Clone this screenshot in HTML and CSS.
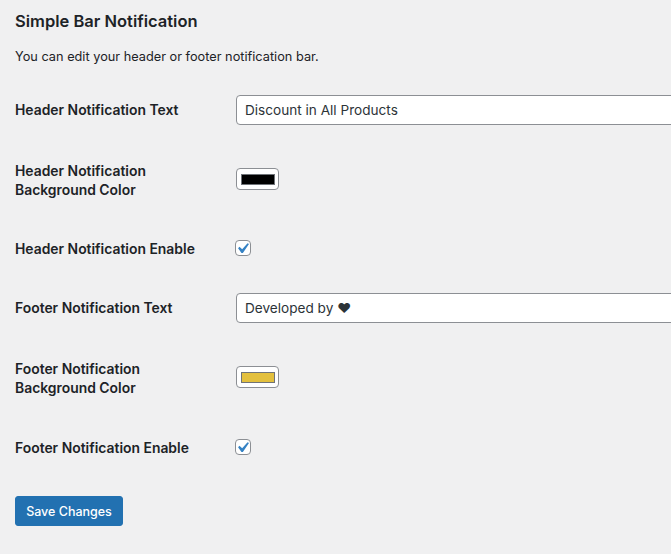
FILE: index.html
```html
<!DOCTYPE html>
<html lang="en">
<head>
<meta charset="utf-8">
<title>Simple Bar Notification</title>
<link rel="stylesheet" href="styles.css">
</head>
<body>
<div class="wrap">
  <h2 class="title">Simple Bar Notification</h2>
  <p class="desc">You can edit your header or footer notification bar.</p>
  <form class="form">
    <div class="row row-text">
      <label class="label">Header Notification Text</label>
      <div class="field"><input class="text" type="text" value="Discount in All Products"></div>
    </div>
    <div class="row row-color">
      <label class="label">Header Notification<br>Background Color</label>
      <div class="field"><span class="color"><span class="swatch swatch-black"></span></span></div>
    </div>
    <div class="row row-check">
      <label class="label">Header Notification Enable</label>
      <div class="field"><span class="check"><svg viewBox="0 0 20 20" width="21" height="21"><path d="M14.83 4.89l1.34.94-5.81 8.38H9.020L5.78 9.670l1.34-1.25 2.57 2.4z" fill="#3582c4"/></svg></span></div>
    </div>
    <div class="row row-text">
      <label class="label">Footer Notification Text</label>
      <div class="field"><input class="text" type="text" value="Developed by &#x2764;&#xFE0E;"></div>
    </div>
    <div class="row row-color">
      <label class="label">Footer Notification<br>Background Color</label>
      <div class="field"><span class="color"><span class="swatch swatch-yellow"></span></span></div>
    </div>
    <div class="row row-check row-last">
      <label class="label">Footer Notification Enable</label>
      <div class="field"><span class="check"><svg viewBox="0 0 20 20" width="21" height="21"><path d="M14.83 4.89l1.34.94-5.81 8.38H9.020L5.78 9.670l1.34-1.25 2.57 2.4z" fill="#3582c4"/></svg></span></div>
    </div>
    <div class="submit">
      <button type="button" class="button">Save Changes</button>
    </div>
  </form>
</div>
</body>
</html>
```

FILE: styles.css
```css
html, body {
  margin: 0;
  padding: 0;
  background: #f0f0f1;
  overflow: hidden;
}
body {
  font-family: "Inter", "DejaVu Sans", sans-serif;
  color: #1d2327;
  font-size: 13px;
  line-height: 1.4;
  width: 671px;
  height: 554px;
}
.wrap {
  padding: 0 0 0 15px;
}
.title {
  margin: 0;
  padding-top: 10px;
  font-size: 16.5px;
  font-weight: 600;
  line-height: 22px;
  height: 22px;
}
.desc {
  margin: 0;
  padding-top: 15px;
  font-size: 12.75px;
  line-height: 20px;
  height: 20px;
}
.form {
  margin-top: 13px;
}
.row {
  display: flex;
  align-items: center;
}
.row-text { height: 60px; }
.row-color { height: 78px; }
.row-check { height: 60px; }
.row-check.row-last { height: 62px; }
.label {
  width: 220px;
  flex: none;
  font-size: 13.9px;
  font-weight: 600;
  line-height: 19px;
  padding-top: 3px;
}
.row-text .label {
  padding-top: 1px;
}
.field {
  flex: 1;
  min-width: 0;
  display: flex;
  align-items: center;
}
.text {
  margin-left: 1px;
  width: 480px;
  flex: none;
  height: 30px;
  box-sizing: border-box;
  border: 1px solid #8c8f94;
  border-radius: 4px;
  background: #fff;
  padding: 0 8px;
  font-family: "Inter", "DejaVu Sans", sans-serif;
  font-size: 13.6px;
  color: #2c3338;
  outline: none;
}
.color {
  margin-left: 1px;
  width: 43px;
  height: 22px;
  box-sizing: border-box;
  border: 1px solid #8c8f94;
  border-radius: 4px;
  background: #fff;
  display: flex;
  align-items: center;
  justify-content: center;
}
.swatch {
  width: 34px;
  height: 11px;
  box-sizing: border-box;
  border: 1px solid #6f7378;
}
.swatch-black { background: #000; }
.swatch-yellow { background: #e3c03e; }
.check {
  width: 16px;
  height: 16px;
  box-sizing: border-box;
  border: 1px solid #8c8f94;
  border-radius: 4px;
  background: #fff;
  position: relative;
  overflow: visible;
}
.check svg {
  position: absolute;
  left: -4px;
  top: -3px;
}
.submit {
  padding-top: 18px;
}
.button {
  height: 30px;
  width: 108px;
  padding: 0;
  border: 1px solid #2271b1;
  border-radius: 3px;
  background: #2271b1;
  color: #fff;
  font-family: "Inter", "DejaVu Sans", sans-serif;
  font-size: 12.5px;
  font-weight: 500;
}
```
